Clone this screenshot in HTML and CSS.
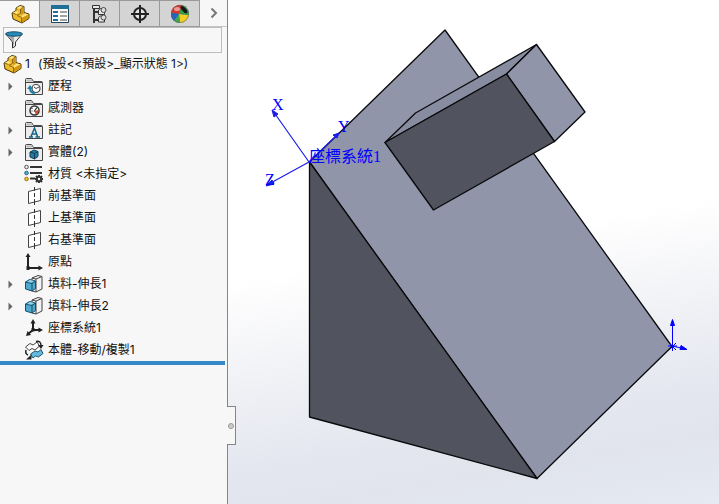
FILE: index.html
```html
<!DOCTYPE html>
<html lang="zh-Hant">
<head>
<meta charset="utf-8">
<title>1</title>
<link rel="stylesheet" href="styles.css">
</head>
<body>
<svg class="defs" aria-hidden="true">
  <defs>
    <symbol id="part" viewBox="0 0 20 20">
      <path d="M2 9l4-2.500V4l4-2.500 4 1v6l5 1.500v4.500L12 19l-9-4z" fill="#f0bb2b" stroke="#4a380c"/>
      <path d="M2.500 9L6 7l3 1-3 2.200zM6.500 4L10 2l3.500 1-3 2zM11.500 12l3.500-2.500 3.500 1-6.500 3z" fill="#ffe480"/>
      <path d="M10.500 5v4.500l-3.500 2 4.500 2V19M10.500 5L13.500 3M2.500 9l4 1.500" fill="none" stroke="#8a6a14"/>
      <path d="M11 5l3-2v6l-3 2zM12 14l6.500-3.500v4L12 18.500z" fill="#cf9618"/>
    </symbol>
    <symbol id="folder" viewBox="0 0 20 20">
      <path d="M1.500 18.500v-15q0-1 1-1h5l2 3h8q1 0 1 1v12z" fill="#ececec" stroke="#454545"/>
      <path d="M2 6.500h16" stroke="#454545" fill="none"/>
      <path d="M2.500 3.500h5l1 2h-6z" fill="#bbb"/>
    </symbol>
    <symbol id="history" viewBox="0 0 20 20">
      <use href="#folder"/><circle cx="12" cy="12.500" r="4" fill="#fff" stroke="#444" stroke-width="1.200"/>
      <path d="M12 12.500l3-1.500M12 12.500L10 11" stroke="#444"/><path d="M11 17Q6 17 6 12" fill="none" stroke="#1b7fa6" stroke-width="2"/><path d="M3 13l3-4 3 4z" fill="#1b7fa6"/>
    </symbol>
    <symbol id="sensor" viewBox="0 0 20 20">
      <use href="#folder"/><circle cx="10.500" cy="12.500" r="4.500" fill="#fff" stroke="#333" stroke-width="1.500"/>
      <path d="M10.500 13l4-1q0 4-3 4z" fill="#e04423"/><path d="M10 13.500l3-4M8 10v1M7.500 13h1" stroke="#222" stroke-width="1.200"/>
    </symbol>
    <symbol id="note" viewBox="0 0 20 20">
      <use href="#folder"/><path d="M5 17h4M11.500 17H16M7 16.500L10.500 8l3 8.500M8 14h4.500" fill="none" stroke="#16658c" stroke-width="1.500"/>
    </symbol>
    <symbol id="solid" viewBox="0 0 20 20">
      <use href="#folder"/><path d="M6 10l4-2 4 1.500v5L10.500 17 6 15z" fill="#227da6" stroke="#123f55"/><path d="M6 10l4.500 1.500L14 9.500M10.500 11.500V17" stroke="#123f55" fill="none"/>
    </symbol>
    <symbol id="material" viewBox="0 0 20 20">
      <path d="M6 3h12M6 9h12M6 14.500h5" stroke="#333" stroke-width="2"/>
      <circle cx="2.500" cy="3" r="1.800" fill="#eee" stroke="#555"/><circle cx="2.500" cy="9" r="1.800" fill="#55b2e2" stroke="#28627e"/><circle cx="2.500" cy="15" r="1.800" fill="#f9c42c" stroke="#98751a"/>
      <path d="M15 11v8M11 15h8M12 12l6 6M18 12l-6 6" stroke="#333" stroke-width="2"/><circle cx="15" cy="15" r="2.200" fill="#f7f7f7" stroke="#333" stroke-width="2"/>
    </symbol>
    <symbol id="plane" viewBox="0 0 20 20">
      <path d="M4.500 5.500l12-3v12l-12 3z" fill="#fff" stroke="#444"/>
      <path d="M10.500 1v4M10.500 7v4M10.500 13v6" stroke="#333"/>
    </symbol>
    <symbol id="origin" viewBox="0 0 20 20">
      <path d="M4 3v13h13" fill="none" stroke="#222" stroke-width="2"/><path d="M1.500 5L4 1l2.500 4zM14.500 13.500l4.500 2.500-4.500 2.500zM2.500 14h3v4h-3z" fill="#222"/>
    </symbol>
    <symbol id="extrude" viewBox="0 0 20 20">
      <path d="M8 4l6-2.500 4 1V15l-6 3-4-1z" fill="#f2f2f2" stroke="#444"/><path d="M8 4l4 1 6-2.500M12 5v13" fill="none" stroke="#444"/>
      <path d="M1.500 8l4-2.500 6 1.500v7.500L8 17l-6.500-2z" fill="#4fa8ce" stroke="#174e68"/><path d="M1.500 8L8 9.500 11.500 7M8 9.500V17" fill="none" stroke="#174e68"/><path d="M3 8l3-2 4 1-2.500 1.500z" fill="#9bd5ec"/>
    </symbol>
    <symbol id="coord" viewBox="0 0 20 20">
      <path d="M9 3v9h8M9 12l-5 4" fill="none" stroke="#222" stroke-width="2"/><path d="M6.500 5.500L9 1l2.500 4.500zM14.500 9.500L19 12l-4.500 2.500zM2 18l1.500-5L7 17zM7.500 10h3v3.500h-3z" fill="#222"/>
    </symbol>
    <symbol id="move" viewBox="0 0 20 20">
      <path d="M1.500 7L6 3.500 9 5l4-3 2.500 4-4.500 4-3-1.500L5 10.500z" fill="#fafafa" stroke="#444"/>
      <path d="M6.500 14L11 11l3 1 3-2.500 2 4-4.500 3.500-3-1-2.500 2z" fill="#65b9df" stroke="#225a72"/>
      <path d="M12 1.500q5-1 5 4M2 10q-1 4 2 5" fill="none" stroke="#222" stroke-width="1.500"/><path d="M14 5h5.500L17 9zM2 19.500h5.500v-5z" fill="#222"/>
    </symbol>
    <symbol id="arrowhead" viewBox="0 0 5 9"><path d="M.5 .5v8l4-4z" fill="#666"/></symbol>
  </defs>
</svg>
<div class="app">
  <aside class="panel">
    <nav class="tabs">
      <button class="tab active" aria-label="特徵樹"><svg class="icon"><use href="#part"/></svg></button>
      <button class="tab" aria-label="屬性"><svg class="icon" viewBox="0 0 20 20"><path d="M1.500 1.500h17v17h-17z" fill="#fff" stroke="#23445a"/><path d="M1 1h18v4H1z" fill="#1f6f99"/><path d="M3 7h5v2H3zM3 11h5v2H3zM3 15h5v2H3z" fill="#1f6f99"/><path d="M10 8h7M10 12h7M10 16h7" stroke="#444"/></svg></button>
      <button class="tab" aria-label="模型組態"><svg class="icon" viewBox="0 0 20 20"><path d="M4 3v16M4 8h6M4 16h6" fill="none" stroke="#333" stroke-width="2"/><path d="M2.500 1.500h7v3h-7zM8.500 6l2-1.500h4v6h-6zM8.500 13.500l2-1.500h4v6h-6z" fill="#e8e8e8" stroke="#333"/><circle cx="13.500" cy="6" r="2.500" fill="#ddd" stroke="#444"/><circle cx="13.500" cy="13.500" r="2.500" fill="#ddd" stroke="#444"/></svg></button>
      <button class="tab" aria-label="尺寸"><svg class="icon" viewBox="0 0 20 20"><circle cx="10" cy="10" r="6" fill="#e5e5e5" stroke="#222" stroke-width="2"/><path d="M10 1v18M1 10h18" stroke="#222" stroke-width="2"/></svg></button>
      <button class="tab" aria-label="外觀"><svg class="icon" viewBox="0 0 20 20"><circle cx="10" cy="10" r="9" fill="#2e78d0"/><path d="M9 10L1 9A9 9 0 0 1 12 1z" fill="#dd3525"/><path d="M9 10L4 17A9 9 0 0 1 1 9z" fill="#2264be"/><path d="M9 10l10 1a9 9 0 0 1-9 8z" fill="#f6cf24"/><path d="M9 10L12 1a9 9 0 0 1 7 10z" fill="#3b9e42"/><path d="M9 10l1 9a9 9 0 0 1-6-2z" fill="#41a84c"/><ellipse cx="14" cy="5.500" rx="2" ry="4.500" transform="rotate(-40 14 5.500)" fill="#161616"/><ellipse cx="7" cy="5" rx="3" ry="2" fill="#fff" opacity=".5"/><circle cx="10" cy="10" r="8.500" fill="none" stroke="#666" opacity=".6"/></svg></button>
      <button class="more" aria-label="更多"><svg viewBox="0 0 8 12"><path d="M1.500 1.500L6 6l-4.500 4.500" fill="none" stroke="#777" stroke-width="2"/></svg></button>
    </nav>
    <label class="filter">
      <svg class="icon" viewBox="0 0 20 20"><path d="M2 4l6.500 8v6l3-2v-4L18 4z" fill="#eee" stroke="#333"/><path d="M4 6l5 6v4l1-1V6z" fill="#aaa"/><ellipse cx="10" cy="4" rx="8.500" ry="2.200" fill="#268bb8" stroke="#17536e"/></svg>
      <input type="text" aria-label="篩選">
    </label>
    <ul class="tree">
      <li class="row root"><svg class="icon"><use href="#part"/></svg><span class="name">1</span><span>(預設&lt;&lt;預設&gt;_顯示狀態 1&gt;)</span></li>
      <li class="row"><button class="toggle" aria-label="展開歷程"><svg><use href="#arrowhead"/></svg></button><svg class="icon"><use href="#history"/></svg><span>歷程</span></li>
      <li class="row"><svg class="icon"><use href="#sensor"/></svg><span>感測器</span></li>
      <li class="row"><button class="toggle" aria-label="展開註記"><svg><use href="#arrowhead"/></svg></button><svg class="icon"><use href="#note"/></svg><span>註記</span></li>
      <li class="row"><button class="toggle" aria-label="展開實體"><svg><use href="#arrowhead"/></svg></button><svg class="icon"><use href="#solid"/></svg><span>實體(2)</span></li>
      <li class="row"><svg class="icon"><use href="#material"/></svg><span>材質 &lt;未指定&gt;</span></li>
      <li class="row"><svg class="icon"><use href="#plane"/></svg><span>前基準面</span></li>
      <li class="row"><svg class="icon"><use href="#plane"/></svg><span>上基準面</span></li>
      <li class="row"><svg class="icon"><use href="#plane"/></svg><span>右基準面</span></li>
      <li class="row"><svg class="icon"><use href="#origin"/></svg><span>原點</span></li>
      <li class="row"><button class="toggle" aria-label="展開填料-伸長1"><svg><use href="#arrowhead"/></svg></button><svg class="icon"><use href="#extrude"/></svg><span>填料-伸長1</span></li>
      <li class="row"><button class="toggle" aria-label="展開填料-伸長2"><svg><use href="#arrowhead"/></svg></button><svg class="icon"><use href="#extrude"/></svg><span>填料-伸長2</span></li>
      <li class="row"><svg class="icon"><use href="#coord"/></svg><span>座標系統1</span></li>
      <li class="row"><svg class="icon"><use href="#move"/></svg><span>本體-移動/複製1</span></li>
    </ul>
    <div class="rollback"></div>
    <button class="handle" aria-label="收合面板"><span></span></button>
  </aside>
  <main class="viewport">
    <svg class="scene" viewBox="228 0 491 504" preserveAspectRatio="xMinYMin meet">
      <g stroke="#0a0a0c" stroke-width="1.300" stroke-linejoin="round">
        <path d="M445 30L672 346.500 537 478.500 309.500 162z" fill="#9195a9"/>
        <path d="M309.500 162V417L537 478.500z" fill="#51535e"/>
        <path d="M385 142.500L415.500 113 536.500 44.500 506.500 74z" fill="#888ca0"/>
        <path d="M506.500 74L536.500 44.500 585 112 554.500 141.500z" fill="#9195a9"/>
        <path d="M385 142.500L506.500 74 554.500 141.500 433.500 210z" fill="#51535e"/>
      </g>
      <g stroke="#1c1ce8" fill="#1c1ce8">
        <path d="M309 162L273 111M309 162L267 185M309 162L338 134" stroke-width="1.200"/>
        <path d="M272 110l6 4-4 3zM266 186l6-6 2 4zM339 133l-2 5-4-3z"/>
      </g>
      <g stroke="#00f" fill="#00f">
        <path d="M672.500 346V320M672 346l14 3M668 346h9M669 343l7 7M669 350l7-7M672.500 342v9"/>
        <path d="M672.500 319.500l-2 6h4zM687 349.500l-7 0 1-4z"/>
      </g>
      <g class="axis-text">
        <text x="272" y="110">X</text><text x="338" y="132">Y</text><text x="265" y="185">Z</text>
        <text x="309" y="162">座標系統1</text>
      </g>
    </svg>
  </main>
</div>
</body>
</html>
```
FILE: styles.css
```css
* { box-sizing: border-box; }
body {
  margin: 0;
  font: 12px/22px Inter, "Noto Sans CJK TC", sans-serif;
  color: #111;
}
button { padding: 0; border: 0; background: none; }
.defs { position: absolute; width: 0; height: 0; }
.app { display: flex; min-height: 100vh; }
.panel {
  position: relative;
  flex: 0 0 228px;
  border-right: 1px solid #858585;
  background: #f7f7f7;
}
.icon { flex: none; display: block; width: 20px; height: 20px; }
.tabs { display: flex; height: 27px; }
.tab {
  display: flex;
  align-items: center;
  justify-content: center;
  width: 40px;
  border: 1px solid #9a9a9a;
  border-left: 0;
  background: #d4d4d4;
}
.tab.active { border-bottom: 0; background: #f7f7f7; }
.more {
  display: flex;
  flex: 1;
  align-items: center;
  justify-content: center;
  border-bottom: 1px solid #c4c4c4;
}
.more svg { width: 8px; height: 12px; }
.filter {
  display: flex;
  align-items: center;
  height: 26px;
  margin: 0 5px 0 3px;
  border: 1px solid #bdbdbd;
}
.filter input {
  flex: 1;
  min-width: 0;
  border: 0;
  outline: 0;
  background: none;
  font: inherit;
}
.tree { margin: 0; padding: 0; list-style: none; }
.row {
  display: grid;
  grid-template-columns: 16px 20px 1fr;
  column-gap: 4px;
  align-items: center;
  height: 22px;
  padding-left: 4px;
  white-space: nowrap;
}
.row .icon { grid-column: 2; }
.row.root { display: flex; gap: 0; padding-left: 2px; }
.name { width: 16px; padding-left: 3px; }
.toggle { display: flex; justify-content: center; padding-right: 4px; }
.toggle svg { width: 5px; height: 9px; }
.rollback { height: 4px; margin-right: 2px; background: #3489c6; }
.handle {
  position: absolute;
  top: 406px;
  right: -9px;
  display: flex;
  align-items: center;
  justify-content: center;
  width: 9px;
  height: 39px;
  border: 1px solid #858585;
  border-left: 0;
  background: #f7f7f7;
}
.handle span {
  flex: none;
  width: 6px;
  height: 6px;
  border: 1px solid #999;
  border-radius: 50%;
  background: #ccc;
}
.viewport {
  flex: 1;
  min-width: 0;
  background: linear-gradient(170deg, #fff 48%, #f0f1f5 66%, #e4e7f0 80%, #e1e4ec 88%, #e6eaf2);
}
.scene { display: block; width: 100%; height: 100vh; }
.axis-text {
  fill: #00f;
  font: 16px "Liberation Serif", "Noto Sans CJK TC", serif;
}
```
